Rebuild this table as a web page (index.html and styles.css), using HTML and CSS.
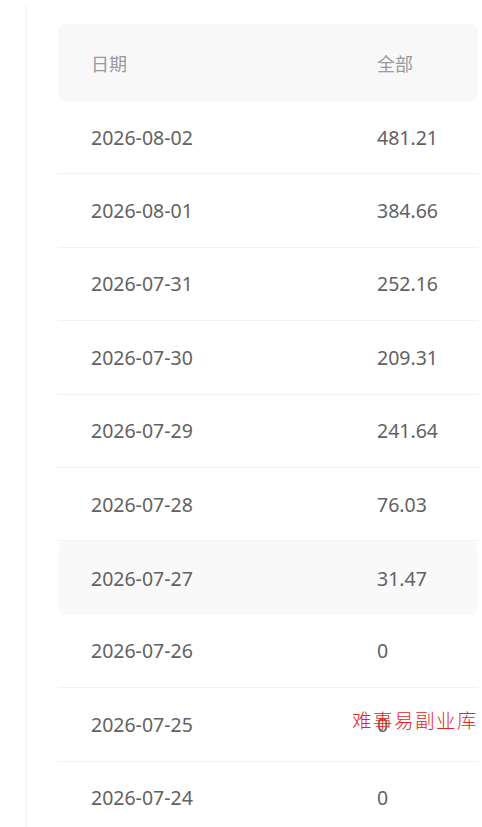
FILE: index.html
```html
<!DOCTYPE html>
<html lang="zh">
<head>
<meta charset="utf-8">
<link rel="stylesheet" href="styles.css">
</head>
<body>
<div class="page">
  <div class="rail"></div>
  <div class="content">
    <div class="table">
      <div class="row head"><div class="c1">日期</div><div class="c2">全部</div></div>
      <div class="row"><div class="c1">2026-08-02</div><div class="c2">481.21</div></div>
      <div class="row"><div class="c1">2026-08-01</div><div class="c2">384.66</div></div>
      <div class="row"><div class="c1">2026-07-31</div><div class="c2">252.16</div></div>
      <div class="row"><div class="c1">2026-07-30</div><div class="c2">209.31</div></div>
      <div class="row"><div class="c1">2026-07-29</div><div class="c2">241.64</div></div>
      <div class="row"><div class="c1">2026-07-28</div><div class="c2">76.03</div></div>
      <div class="row hl"><div class="c1">2026-07-27</div><div class="c2">31.47</div></div>
      <div class="row"><div class="c1">2026-07-26</div><div class="c2">0</div></div>
      <div class="row"><div class="c1">2026-07-25</div><div class="c2">0</div></div>
      <div class="row"><div class="c1">2026-07-24</div><div class="c2">0</div></div>
    </div>
  </div>
  <div class="watermark">难事易副业库</div>
</div>
</body>
</html>
```

FILE: styles.css
```css
html, body {
  margin: 0;
  padding: 0;
  background: #fff;
}
.page {
  position: relative;
  display: flex;
  width: 482px;
  height: 827px;
  overflow: hidden;
  font-family: "Noto Sans", "Noto Sans CJK SC", sans-serif;
}
.rail {
  flex: 0 0 25px;
  margin-top: 6px;
  border-right: 2px solid #f5f5f5;
  background: #fff;
}
.content {
  flex: 1;
  padding: 24px 4px 0 31px;
}
.table {
  width: 420px;
}
.row {
  display: flex;
  align-items: center;
  height: 73.4px;
  border-bottom: 1px solid #f2f2f2;
  box-sizing: border-box;
  color: #626262;
  font-size: 19.5px;
}
.row.head {
  height: 77px;
  background: #f8f8f8;
  border-radius: 8px;
  border-bottom: none;
  color: #9a9a9a;
  font-size: 18px;
}
.row.hl {
  background: #f9f9fa;
  border-radius: 8px;
  border-bottom: none;
}
.c1 {
  width: 286px;
  padding-left: 33px;
}
.c2 {
  flex: 1;
}
.watermark {
  position: absolute;
  left: 352px;
  top: 705px;
  color: #e3261c;
  font-family: "Noto Sans CJK SC", serif;
  font-weight: 300;
  font-size: 19.5px;
  letter-spacing: 1.5px;
}
```
